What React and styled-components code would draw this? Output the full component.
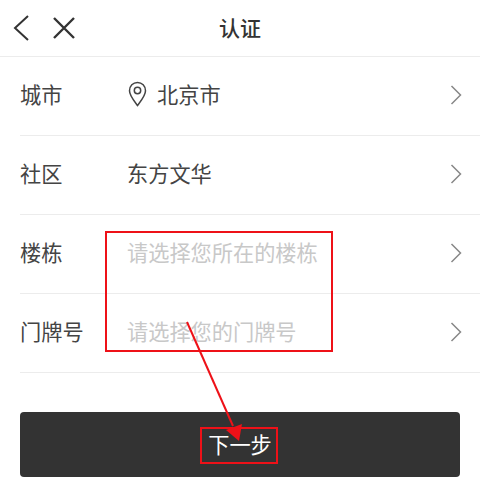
import React from 'react'
import styled, { createGlobalStyle } from 'styled-components'

const GlobalStyle = createGlobalStyle`
    html, body {
        margin: 0;
        padding: 0;
        background: #fff;
    }
    body {
        font-family: "Noto Sans CJK SC", "Liberation Sans", sans-serif;
    }
`

const Page = styled.div`
    position: relative;
    width: 480px;
    height: 479px;
    overflow: hidden;
    background: #fff;
`

const Header = styled.div`
    position: relative;
    height: 56px;
    display: flex;
    align-items: center;
    justify-content: center;
    border-bottom: 1px solid #ececec;
`

const HeaderIcons = styled.div`
    position: absolute;
    left: 13px;
    top: 15px;
    display: flex;
    align-items: center;
    gap: 24px;
`

const Title = styled.div`
    font-size: 21px;
    font-weight: 500;
    padding-bottom: 3px;
    color: #333;
`

const Row = styled.div`
    height: 78px;
    margin-left: 20px;
    padding-right: 18px;
    display: flex;
    align-items: center;
    border-bottom: 1px solid #ececec;
`

const Label = styled.div`
    width: 107px;
    font-size: 21.2px;
    padding-bottom: 5px;
    color: #444;
`

const Value = styled.div`
    flex: 1;
    display: flex;
    align-items: center;
    gap: 9px;
    font-size: 21.2px;
    padding-bottom: 5px;
    color: ${props => (props.$placeholder ? '#c8c8c8' : '#444')};
`

const Arrow = styled.svg`
    margin-bottom: 2px;
`

const Footer = styled.div`
    padding: 39px 20px 0;
`

const NextBtn = styled.div`
    height: 65px;
    display: flex;
    align-items: center;
    justify-content: center;
    border-radius: 4px;
    background: #333;
    color: #fff;
    font-size: 21.2px;
    padding-bottom: 3px;
    box-sizing: border-box;
`

const RedBox = styled.div`
    position: absolute;
    left: ${props => props.$left}px;
    top: ${props => props.$top}px;
    width: ${props => props.$width}px;
    height: ${props => props.$height}px;
    box-sizing: border-box;
    border: 2px solid #ee1118;
`

const ArrowLayer = styled.svg`
    position: absolute;
    left: 0;
    top: 0;
`

const Chevron = () => (
    <Arrow width="12" height="20" viewBox="0 0 12 20" fill="none" stroke="#888" strokeWidth="1.5">
        <path d="M1.5 1 L10.5 10 L1.5 19" />
    </Arrow>
)

const rows = [
    { label: '城市', value: '北京市', pin: true },
    { label: '社区', value: '东方文华' },
    { label: '楼栋', value: '请选择您所在的楼栋', placeholder: true },
    { label: '门牌号', value: '请选择您的门牌号', placeholder: true },
]

function App() {
    return (
        <Page>
            <GlobalStyle />
            <Header>
                <HeaderIcons>
                    <svg width="16" height="26" viewBox="0 0 16 26" fill="none" stroke="#333" strokeWidth="2">
                        <path d="M15 1 L2 13 L15 25" />
                    </svg>
                    <svg width="22" height="22" viewBox="0 0 22 22" fill="none" stroke="#333" strokeWidth="2.4">
                        <path d="M1 1 L21 21 M21 1 L1 21" />
                    </svg>
                </HeaderIcons>
                <Title>认证</Title>
            </Header>
            {rows.map((row) => (
                <Row key={row.label}>
                    <Label>{row.label}</Label>
                    <Value $placeholder={row.placeholder}>
                        {row.pin && (
                            <svg width="21" height="26" viewBox="0 0 21 26" fill="none" stroke="#444" strokeWidth="1.5">
                                <path d="M10.5 24.5 C6 18.5 2.5 14.5 2.5 9.8 C2.5 5 6 1.5 10.5 1.5 C15 1.5 18.5 5 18.5 9.8 C18.5 14.5 15 18.5 10.5 24.5 Z" />
                                <circle cx="10.5" cy="9.5" r="3.2" />
                            </svg>
                        )}
                        {row.value}
                    </Value>
                    <Chevron />
                </Row>
            ))}
            <Footer>
                <NextBtn>下一步</NextBtn>
            </Footer>
            <RedBox $left={105} $top={231} $width={228} $height={121} />
            <RedBox $left={200} $top={427} $width={78} $height={37} />
            <ArrowLayer width="480" height="479" viewBox="0 0 480 479">
                <path d="M187 322 L233 426" stroke="#ee1118" strokeWidth="2" fill="none" />
                <path d="M239 441 L226 430 L242 424 Z" fill="#ee1118" />
            </ArrowLayer>
        </Page>
    )
}

export default App
